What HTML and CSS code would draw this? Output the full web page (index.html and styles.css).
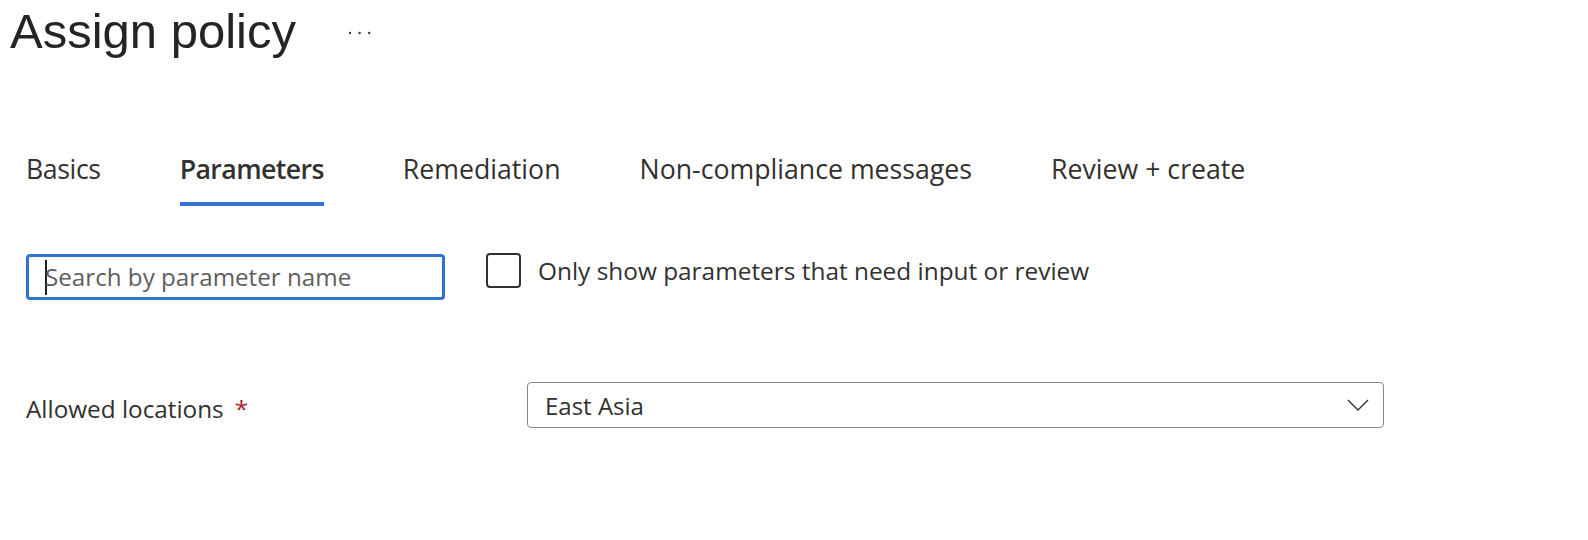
FILE: index.html
```html
<!DOCTYPE html>
<html lang="en">
<head>
<meta charset="utf-8">
<title>Assign policy</title>
<link rel="stylesheet" href="styles.css">
</head>
<body>
<div class="page">
  <header class="title-bar">
    <h1 class="title">Assign policy</h1>
    <button class="more" aria-label="More actions">
      <svg width="24" height="6" viewBox="0 0 24 6"><circle cx="2" cy="3" r="1.2"/><circle cx="11.6" cy="3" r="1.2"/><circle cx="21.2" cy="3" r="1.2"/></svg>
    </button>
  </header>
  <nav class="tabs">
    <div class="tab">Basics</div>
    <div class="tab active">Parameters</div>
    <div class="tab">Remediation</div>
    <div class="tab">Non-compliance messages</div>
    <div class="tab">Review + create</div>
  </nav>
  <div class="filters">
    <div class="search"><span class="caret"></span><span class="placeholder">Search by parameter name</span></div>
    <label class="check"><span class="box"></span><span class="check-label">Only show parameters that need input or review</span></label>
  </div>
  <div class="param-row">
    <div class="param-label">Allowed locations<span class="req">*</span></div>
    <div class="select">
      <span class="select-value">East Asia</span>
      <svg class="chevron" width="22" height="12" viewBox="0 0 22 12"><path d="M1 1 L11 11 L21 1" fill="none" stroke="#323130" stroke-width="1.4"/></svg>
    </div>
  </div>
</div>
</body>
</html>
```
FILE: styles.css
```css
html, body {
  margin: 0;
  padding: 0;
  background: #ffffff;
}
body {
  font-family: "Open Sans", "Noto Sans", sans-serif;
  color: #323130;
  width: 1588px;
  height: 540px;
  overflow: hidden;
}
.title-bar {
  display: flex;
  align-items: flex-start;
  padding: 3px 0 0 10px;
}
.title {
  margin: 0;
  font-family: "Liberation Sans", Arial, sans-serif;
  font-weight: 400;
  font-size: 49px;
  line-height: 56px;
  color: #252423;
}
.more {
  margin: 27px 0 0 52px;
  padding: 0;
  border: 0;
  background: none;
  line-height: 0;
  fill: #3b3a39;
}
.tabs {
  display: flex;
  gap: 79px;
  margin-top: 92px;
  padding-left: 26px;
}
.tab {
  font-size: 26.7px;
  line-height: 36px;
  padding-bottom: 15px;
  border-bottom: 4px solid transparent;
  color: #323130;
  white-space: nowrap;
}
.tab:first-child {
  letter-spacing: -0.4px;
}
.tab.active {
  font-weight: 600;
  letter-spacing: -0.6px;
  border-bottom-color: #2f74d0;
}
.filters {
  display: flex;
  align-items: flex-start;
  margin-top: 47px;
  padding-left: 26px;
}
.search {
  box-sizing: border-box;
  width: 419px;
  height: 46px;
  margin-top: 1px;
  border: 3px solid #2f74d0;
  border-radius: 4px;
  display: flex;
  align-items: center;
  padding-left: 16px;
}
.caret {
  width: 2px;
  height: 35px;
  background: #201f1e;
  margin-right: -2px;
}
.placeholder {
  font-size: 24.2px;
  line-height: 1;
  color: #605e5c;
}
.check {
  display: flex;
  align-items: center;
  gap: 17px;
  margin-left: 41px;
  font-size: 24.4px;
}
.box {
  box-sizing: border-box;
  width: 35px;
  height: 35px;
  border: 2px solid #323130;
  border-radius: 4px;
}
.param-row {
  display: grid;
  grid-template-columns: 501px 857px;
  align-items: center;
  margin-top: 82px;
  padding-left: 26px;
}
.param-label {
  font-size: 24.3px;
  padding-top: 7px;
}
.req {
  color: #a4262c;
  margin-left: 11px;
}
.select {
  box-sizing: border-box;
  height: 46px;
  border: 1px solid #8a8886;
  border-radius: 4px;
  display: flex;
  align-items: center;
  justify-content: space-between;
  padding: 0 14px 0 17px;
  font-size: 24px;
}
.chevron {
  display: block;
}
```
